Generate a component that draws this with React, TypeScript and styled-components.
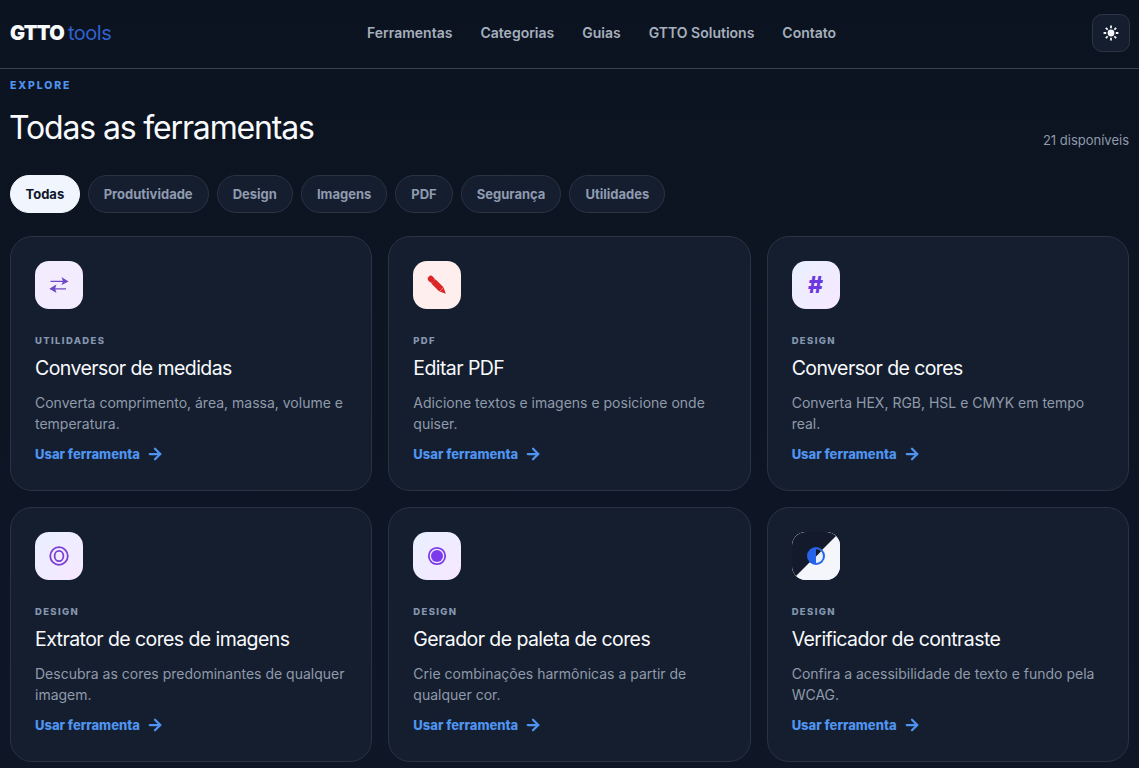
import React from "react";
import styled, { createGlobalStyle } from "styled-components";
import { ArrowRight } from "lucide-react";

const GlobalStyle = createGlobalStyle`
  html, body {
    margin: 0;
    padding: 0;
    background: #0c1320;
    font-family: Inter, "Liberation Sans", sans-serif;
  }
  * { box-sizing: border-box; }
`;

const Page = styled.div`
  width: 1139px;
  height: 768px;
  overflow: hidden;
  background: linear-gradient(180deg, #0c1320 0%, #0f1727 100%);
`;

const Header = styled.header`
  height: 69px;
  padding: 0 9px 2px 10px;
  display: flex;
  justify-content: space-between;
  align-items: center;
  border-bottom: 1px solid #3a4250;
`;

const Logo = styled.div`
  font-size: 20px;
  letter-spacing: -0.7px;
  font-weight: 900;
  color: #f8fafc;
  span {
    font-weight: 400;
    letter-spacing: -0.5px;
    color: #2f62cf;
    margin-left: 4px;
  }
`;

const Nav = styled.nav`
  display: flex;
  gap: 28px;
  margin-bottom: 2px;
`;

const NavLink = styled.a`
  font-size: 14px;
  font-weight: 600;
  color: #a5afbd;
`;

const ThemeButton = styled.button`
  width: 38px;
  height: 38px;
  padding: 0;
  display: flex;
  align-items: center;
  justify-content: center;
  border-radius: 10px;
  border: 1px solid #2c3544;
  background: #151e2e;
  color: #f1f5f9;
`;

const Main = styled.main`
  padding: 0 10px;
`;

const Eyebrow = styled.div`
  margin-top: 11px;
  font-size: 10.5px;
  line-height: 12px;
  font-weight: 800;
  letter-spacing: 1.85px;
  color: #4f94f0;
`;

const TitleRow = styled.div`
  display: flex;
  justify-content: space-between;
  align-items: flex-end;
  margin-top: 14px;
`;

const Title = styled.h1`
  margin: 0 0 0 -1px;
  font-size: 32px;
  line-height: 44px;
  font-weight: 400;
  letter-spacing: -1.15px;
  color: #f8fafc;
`;

const Count = styled.div`
  font-size: 13px;
  line-height: 16px;
  color: #8f9aab;
  margin-bottom: 2px;
`;

const Filters = styled.div`
  display: flex;
  gap: 8px;
  margin-top: 25px;
`;

const Chip = styled.button<{ $active?: boolean }>`
  height: 38px;
  padding: 0 ${(p) => (p.$active ? "14.5px" : "15px")};
  border-radius: 19px;
  font-family: inherit;
  font-size: 13px;
  font-weight: 700;
  border: 1px solid ${(p) => (p.$active ? "#f1f5fd" : "#2a3342")};
  background: ${(p) => (p.$active ? "#f1f5fd" : "#151e2e")};
  color: ${(p) => (p.$active ? "#0f172a" : "#8f9bb0")};
`;

const Grid = styled.div`
  display: grid;
  grid-template-columns: repeat(3, 1fr);
  grid-auto-rows: 255px;
  gap: 16px;
  margin-top: 23px;
`;

const Card = styled.article`
  padding: 24px;
  border-radius: 22px;
  border: 1px solid #2a3342;
  background: #151e2e;
`;

const IconBox = styled.div<{ $bg: string }>`
  width: 48px;
  height: 48px;
  border-radius: 14px;
  display: flex;
  align-items: center;
  justify-content: center;
  background: ${(p) => p.$bg};
  overflow: hidden;
`;

const HashGlyph = styled.span`
  font-size: 23px;
  line-height: 1;
  font-weight: 800;
  color: #6d38e0;
`;

const Category = styled.div`
  margin-top: 26px;
  font-size: 9.5px;
  line-height: 12px;
  font-weight: 800;
  letter-spacing: 1.35px;
  color: #8496b0;
`;

const CardTitle = styled.h2`
  margin: 7px 0 0;
  font-size: 19.5px;
  line-height: 28px;
  font-weight: 400;
  letter-spacing: -0.58px;
  color: #f8fafc;
`;

const Description = styled.p`
  margin: 10px 0 0;
  font-size: 14px;
  line-height: 21px;
  color: #8f9aab;
`;

const ToolLink = styled.a`
  display: flex;
  align-items: center;
  gap: 6px;
  margin-top: 10px;
  font-size: 13px;
  line-height: 20px;
  font-weight: 800;
  color: #4f94f0;
`;

const soft = "linear-gradient(135deg, #e9f0ff, #f7e8ff)";

const SwapIcon = () => (
  <svg width="20" height="20" viewBox="0 0 20 20" fill="none" stroke="#6d48c8" strokeWidth="1.2">
    <path d="M1.5 6.4h15.5M1.5 13.8h15.5" />
    <path d="M13.6 3.4 18.4 6.4 13.6 8.8 14.6 6.4Z" fill="#6d48c8" />
    <path d="M6.4 10.8 1.6 13.8 6.4 16.6 5.4 13.8Z" fill="#6d48c8" />
  </svg>
);

const PencilIcon = () => (
  <svg width="20" height="20" viewBox="0 0 20 20" fill="none" stroke="#dc2626">
    <path d="M3.8 3.8 4.6 4.6" strokeWidth="6" strokeLinecap="round" />
    <path d="M6.4 6.4 14.4 14.4" strokeWidth="6" />
    <path d="M16.6 12.6 18.8 18.8 12.6 16.6Z" fill="#dc2626" stroke="none" />
  </svg>
);

const RingIcon = () => (
  <svg width="22" height="22" viewBox="0 0 22 22" fill="none" stroke="#7c3fd8">
    <circle cx="11" cy="11" r="8.8" strokeWidth="1.8" />
    <ellipse cx="11" cy="11" rx="4.4" ry="5.2" strokeWidth="1.8" />
  </svg>
);

const DotIcon = () => (
  <svg width="20" height="20" viewBox="0 0 20 20">
    <circle cx="10" cy="10" r="8.2" fill="none" stroke="#7c3aed" strokeWidth="1.8" />
    <circle cx="10" cy="10" r="6" fill="#7c3aed" />
  </svg>
);

const ContrastIcon = () => (
  <svg width="48" height="48" viewBox="0 0 48 48">
    <rect width="48" height="48" fill="#f4f6fb" />
    <path d="M0 0H48L0 48Z" fill="#121a2b" />
    <circle cx="24" cy="24" r="9" fill="#2563eb" />
    <path d="M24 17a7 7 0 0 1 0 14Z" fill="#e9effc" />
    <path d="M24 17a7 7 0 0 1 5.2 2.3L24 24.4Z" fill="#121a2b" />
  </svg>
);

const SunIcon = () => (
  <svg width="16" height="16" viewBox="0 0 16 16" fill="none" stroke="currentColor" strokeWidth="1.8">
    <circle cx="8" cy="8" r="3.4" fill="currentColor" stroke="none" />
    <path d="M8 .6v2.6M8 12.8v2.6M.6 8h2.6M12.8 8h2.6M2.8 2.8l1.9 1.9M11.3 11.3l1.9 1.9M13.2 2.8l-1.9 1.9M4.7 11.3l-1.9 1.9" />
  </svg>
);

const navItems = ["Ferramentas", "Categorias", "Guias", "GTTO Solutions", "Contato"];
const filters = ["Todas", "Produtividade", "Design", "Imagens", "PDF", "Segurança", "Utilidades"];

const tools = [
  {
    category: "Utilidades",
    title: "Conversor de medidas",
    text: "Converta comprimento, área, massa, volume e temperatura.",
    bg: "#f3ecff",
    icon: <SwapIcon />,
  },
  {
    category: "PDF",
    title: "Editar PDF",
    text: "Adicione textos e imagens e posicione onde quiser.",
    bg: "#ffeeee",
    icon: <PencilIcon />,
  },
  {
    category: "Design",
    title: "Conversor de cores",
    text: "Converta HEX, RGB, HSL e CMYK em tempo real.",
    bg: soft,
    icon: <HashGlyph>#</HashGlyph>,
  },
  {
    category: "Design",
    title: "Extrator de cores de imagens",
    text: "Descubra as cores predominantes de qualquer imagem.",
    bg: soft,
    icon: <RingIcon />,
  },
  {
    category: "Design",
    title: "Gerador de paleta de cores",
    text: "Crie combinações harmônicas a partir de qualquer cor.",
    bg: soft,
    icon: <DotIcon />,
  },
  {
    category: "Design",
    title: "Verificador de contraste",
    text: "Confira a acessibilidade de texto e fundo pela WCAG.",
    bg: "#f4f6fb",
    icon: <ContrastIcon />,
  },
];

export default function App() {
  return (
    <Page>
      <GlobalStyle />
      <Header>
        <Logo>
          GTTO<span>tools</span>
        </Logo>
        <Nav>
          {navItems.map((item) => (
            <NavLink key={item}>{item}</NavLink>
          ))}
        </Nav>
        <ThemeButton aria-label="Tema">
          <SunIcon />
        </ThemeButton>
      </Header>
      <Main>
        <Eyebrow>EXPLORE</Eyebrow>
        <TitleRow>
          <Title>Todas as ferramentas</Title>
          <Count>21 disponíveis</Count>
        </TitleRow>
        <Filters>
          {filters.map((item, i) => (
            <Chip key={item} $active={i === 0}>
              {item}
            </Chip>
          ))}
        </Filters>
        <Grid>
          {tools.map((tool) => (
            <Card key={tool.title}>
              <IconBox $bg={tool.bg}>{tool.icon}</IconBox>
              <Category>{tool.category.toUpperCase()}</Category>
              <CardTitle>{tool.title}</CardTitle>
              <Description>{tool.text}</Description>
              <ToolLink>
                Usar ferramenta <ArrowRight size={18} strokeWidth={3} />
              </ToolLink>
            </Card>
          ))}
        </Grid>
      </Main>
    </Page>
  );
}
